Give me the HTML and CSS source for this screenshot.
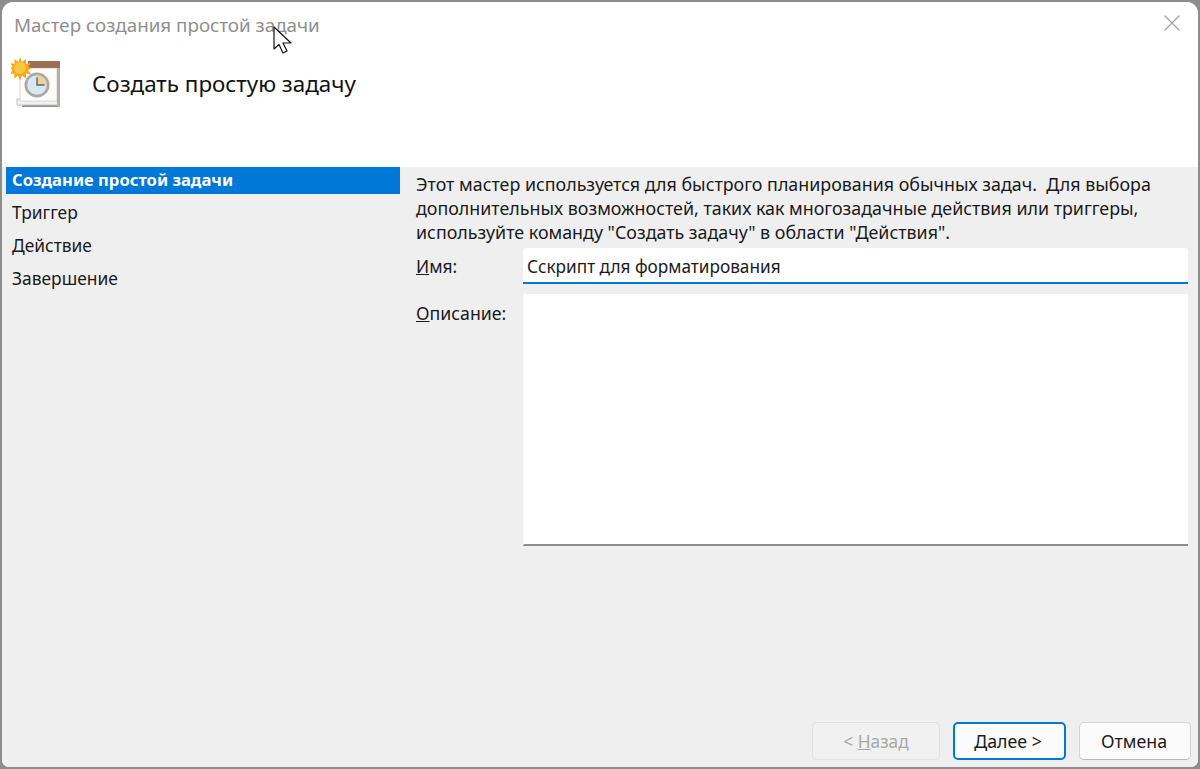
FILE: index.html
```html
<!DOCTYPE html>
<html lang="ru">
<head>
<meta charset="utf-8">
<title>Мастер создания простой задачи</title>
<link rel="stylesheet" href="styles.css">
</head>
<body>
<div class="window">
  <div class="titlebar">
    <span class="title">Мастер создания простой задачи</span>
    <svg class="close" width="16" height="16" viewBox="0 0 16 16"><path d="M.5 .5L15.500 15.500M15.500 .5L.5 15.500" stroke="#a3a3a3" stroke-width="1.300" fill="none"/></svg>
  </div>
  <div class="header">
    <svg class="wizard-icon" width="52" height="54" viewBox="0 0 52 54">
      <rect x="12" y="44" width="38" height="6" fill="#8f8f8f"/>
      <rect x="7" y="42" width="41" height="6" fill="#f1f1f1" stroke="#c4c4c4" stroke-width="1"/>
      <rect x="10" y="11" width="37" height="33" fill="#fdfcf8" stroke="#d8d8d8" stroke-width="1"/>
      <rect x="18" y="4" width="32" height="7" fill="#9c6f54"/>
      <rect x="47" y="11" width="3" height="39" fill="#b0b0b0"/>
      <circle cx="27" cy="28" r="12.500" fill="#a9a9a9"/>
      <circle cx="27" cy="28" r="9.800" fill="#dbe6f0"/>
      <path d="M27 18.200A9.800 9.800 0 0 1 36.800 28H27Z" fill="#efd394"/>
      <path d="M27 20.500V28H34.500" stroke="#5a6a7a" stroke-width="1.500" fill="none"/>
      <path d="M10 0l2 5 4-3 0 5 5-1-3 4 4 1-4 2 3 4-5-.5 0 5-4-3-2 5-2-5-4 3 .5-5-4 .5 2-4-2-2 2-1-2-4 4 1 0-5 4 3z" fill="#f7a51c"/>
      <circle cx="10" cy="11" r="6" fill="#fcc93a"/>
    </svg>
    <span class="heading">Создать простую задачу</span>
  </div>
  <div class="main">
    <ul class="steps">
      <li class="step step-active">Создание простой задачи</li>
      <li class="step">Триггер</li>
      <li class="step">Действие</li>
      <li class="step">Завершение</li>
    </ul>
    <div class="content">
      <p class="intro">Этот мастер используется для быстрого планирования обычных задач.&nbsp; Для выбора<br>дополнительных возможностей, таких как многозадачные действия или триггеры,<br>используйте команду "Создать задачу" в области "Действия".</p>
      <div class="field-row">
        <span class="label"><u>И</u>мя:</span>
        <div class="input">Сскрипт для форматирования</div>
      </div>
      <div class="field-row field-row-grow">
        <span class="label label-top"><u>О</u>писание:</span>
        <div class="textarea"></div>
      </div>
    </div>
  </div>
  <div class="footer">
    <div class="btn btn-disabled">&lt; <u>Н</u>азад</div>
    <div class="btn btn-primary btn-next"><u>Д</u>алее &gt;</div>
    <div class="btn btn-cancel">Отмена</div>
  </div>
  <svg class="cursor" width="20" height="30" viewBox="0 0 20 30"><path d="M1 1V23L6 18.500L10 27L14 25L10 17H18Z" fill="#fff" stroke="#111" stroke-width="1.200" stroke-linejoin="round"/></svg>
</div>
</body>
</html>
```
FILE: styles.css
```css
* { box-sizing: border-box; }
html, body { margin: 0; padding: 0; width: 1200px; height: 769px; overflow: hidden; background: #8d8d8d; }
body { font-family: "Noto Sans", "Open Sans", sans-serif; color: #111; }
.window {
  position: relative;
  width: 1196px;
  height: 765px;
  margin: 2px 0 0 2px;
  background: #fff;
  border-radius: 11px 11px 7px 7px;
  overflow: hidden;
  display: flex;
  flex-direction: column;
}
.titlebar { height: 52px; display: flex; justify-content: space-between; align-items: flex-start; padding: 13px 18px 0 12px; flex: none; }
.title { font-size: 18.800px; line-height: 20px; color: #8f8f8f; }
.close { margin-top: 0; }
.header { height: 113px; flex: none; display: flex; align-items: flex-start; padding: 3px 0 0 8px; }
.wizard-icon { flex: none; }
.heading { font-size: 22.400px; line-height: 30px; margin: 12px 0 0 30px; color: #111; }
.main { flex: 1; display: flex; background: #efefef; min-height: 0; }
.steps { list-style: none; margin: 0; padding: 0 0 0 4px; width: 398px; flex: none; }
.step { height: 27px; line-height: 25px; margin-bottom: 6px; padding-left: 6px; font-size: 17.400px; color: #1a1a1a; }
.step-active { background: #0078d7; color: #fff; font-weight: 700; font-size: 16.600px; line-height: 25px; }
.content { flex: 1; display: flex; flex-direction: column; padding: 5px 10px 0 16px; }
.intro { margin: 0; font-size: 17.850px; line-height: 24px; white-space: nowrap; color: #1a1a1a; }
.field-row { display: flex; margin-top: 4px; height: 36px; flex: none; }
.field-row-grow { margin-top: 10px; height: 252px; }
.label { width: 107px; flex: none; font-size: 17.400px; line-height: 36px; color: #1a1a1a; }
.label-top { font-size: 17.750px; line-height: 38px; }
.input { flex: 1; background: #fff; border-bottom: 2px solid #0078d7; border-radius: 3px 3px 0 0; padding-left: 4px; font-size: 17.200px; line-height: 37px; color: #1a1a1a; }
.textarea { flex: 1; background: #fff; border-bottom: 2px solid #8d8d8d; border-left: 1px solid #f7f7f7; }
.footer { height: 45px; flex: none; display: flex; background: #efefef; padding: 0 7px 7px 810px; }
.btn { height: 38px; border-radius: 5px; font-size: 17.800px; line-height: 37px; text-align: center; background: #fbfbfb; border: 1px solid #d3d3d3; border-bottom-color: #b8b8b8; color: #1a1a1a; }
.btn-disabled { width: 128px; background: #f1f1f1; border-color: #e2e2e2; color: #a8a8a8; font-size: 17.300px; }
.btn-next { width: 113px; margin-left: 13px; padding-right: 3px; }
.btn-primary { border: 2px solid #0078d7; line-height: 35px; }
.btn-cancel { width: 112px; margin-left: 13px; padding-right: 2px; }
.cursor { position: absolute; left: 271px; top: 24px; }
```
